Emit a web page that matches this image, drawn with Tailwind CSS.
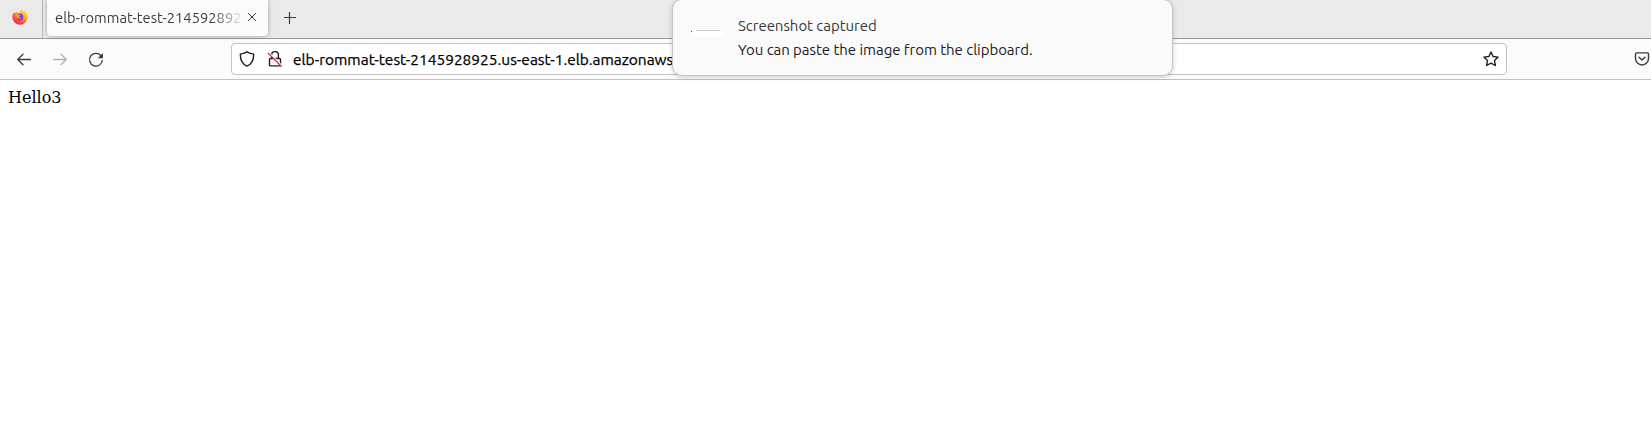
<!DOCTYPE html>
<html lang="en">
<head>
<meta charset="utf-8">
<title>Browser</title>
<script src="https://cdn.jsdelivr.net/npm/@tailwindcss/browser@4"></script>
</head>
<body class="relative h-[448px] w-[1651px] overflow-hidden bg-white font-['Ubuntu','Noto_Sans',sans-serif] text-[#3d3d3d]">
<header>
  <div class="flex h-[39px] items-start border-b border-[#999] bg-[#eaeaea]">
    <div class="flex h-[38px] w-[43px] shrink-0 items-center border-r border-[#b5b5b5] pl-3">
      <svg class="-mt-1 h-4 w-4" viewBox="0 0 16 16">
        <defs>
          <linearGradient id="fire" x1=".85" y1="0" x2=".2" y2="1"><stop offset="0" stop-color="#fff044"/><stop offset=".4" stop-color="#ffb02c"/><stop offset=".7" stop-color="#ff4a48"/><stop offset="1" stop-color="#f01c70"/></linearGradient>
          <linearGradient id="globe" x1=".8" y1="0" x2=".3" y2="1"><stop offset="0" stop-color="#a43be8"/><stop offset="1" stop-color="#5945d8"/></linearGradient>
        </defs>
        <path d="M9.600 0c.6 1.300 1.500 2.100 2.500 3.100.2-.6.1-1 .1-1.500 2.200 1.300 3.500 3.700 3.500 6.500a7.700 7.600 0 0 1-15.400 0c0-2.100.8-3.800 2-5.400l.6 1.300.9.100L4.900 2l.5 1.600 2.600.1C8 2.600 8.400 1.100 9.600 0z" fill="url(#fire)"/>
        <circle cx="8.100" cy="7.900" r="3.300" fill="url(#globe)"/>
        <path d="M3.500 5.600c1.300-.8 2.600-.5 3.400.3l1.600.2c0 .8-1.300.9-1.600 1.500-.2.900.9 1.600 2.700.9-.9 1.800-3.800 1.800-4.800.1z" fill="#ff9b2b"/>
      </svg>
    </div>
    <div class="ml-1 flex h-9 w-[221px] shrink-0 items-center rounded-b bg-[#fbfbfb] pr-2 pl-2 shadow-[0_0_4px_rgba(0,0,0,0.35)]">
      <div class="w-[192px] shrink-0 text-[14.670px] leading-5 tracking-[0.04px] whitespace-nowrap [mask-image:linear-gradient(to_right,black_158px,transparent_190px)]">elb-rommat-test-2145928925</div>
      <svg class="-mt-0.5 h-2.5 w-2.5 shrink-0" viewBox="0 0 10 10" fill="none" stroke="#3d3d3d" stroke-width="1"><path d="M1 1l8 8M9 1l-8 8"/></svg>
    </div>
    <svg class="mt-3 ml-4 h-3 w-3" viewBox="0 0 12 12" fill="none" stroke="#3d3d3d" stroke-width="1.200"><path d="M5.500 0v12M0 5.500h12"/></svg>
  </div>
  <div class="flex h-[41px] items-center border-b border-[#c2c2c2] bg-[#fbfbfb]">
    <svg class="mt-px ml-4 h-4 w-4" viewBox="0 0 16 16" fill="none" stroke="#3d3d3d" stroke-width="1.300" stroke-linecap="round" stroke-linejoin="round"><path d="M14.500 7.500H1.700M7 2.200L1.700 7.500 7 12.800"/></svg>
    <svg class="mt-px ml-5 h-4 w-4" viewBox="0 0 16 16" fill="none" stroke="#b3b3b3" stroke-width="1.300" stroke-linecap="round" stroke-linejoin="round"><path d="M1.500 7.500h12.800M9 2.200L14.300 7.500 9 12.800"/></svg>
    <svg class="mt-px ml-5 h-4 w-4" viewBox="0 0 16 16" fill="none" stroke="#3d3d3d" stroke-width="1.300" stroke-linecap="round"><path d="M12.800 3.500A6.400 6.400 0 1 0 14.300 8.500"/><path d="M15 1v5.200H9.800z" fill="#3d3d3d" stroke="none"/></svg>
    <div class="ml-[127px] flex h-8 w-[1276px] items-center rounded border border-[#c2c2c2] bg-white text-black">
      <svg class="ml-[7px] h-4 w-4" viewBox="0 0 16 16" fill="none" stroke="#202020" stroke-width="1.400" stroke-linejoin="round"><path d="M8 .8C6.400 1.900 3.700 2.600 1.300 3.100c-.1 5.200 1.300 9.900 6.700 12.100 5.400-2.200 6.800-6.900 6.700-12.100C12.300 2.600 9.600 1.900 8 .8z"/></svg>
      <svg class="ml-3 h-4 w-4" viewBox="0 0 16 16" fill="none" stroke="#202020" stroke-width="1.400"><path d="M4.600 7.500V4a3.400 3.400 0 0 1 6.800 0v3.500M3.500 7.500h9q1 0 1 1v5.400q0 1-1 1h-9q-1 0-1-1V8.500q0-1 1-1z"/><path d="M1.500 1.200L15.500 15.200" stroke="#fff" stroke-width="1.500"/><path d="M1 2L14.700 15.700" stroke="#e22850" stroke-width="1.300"/></svg>
      <span class="mt-0.5 ml-2.5 text-[15.470px] leading-5 whitespace-nowrap [-webkit-text-stroke:0.25px_black]">elb-rommat-test-2145928925.us-east-1.elb.amazonaws</span>
      <svg class="mr-[7px] ml-auto h-4 w-4" viewBox="0 0 16 16" fill="none" stroke="#202020" stroke-width="1.400" stroke-linejoin="round"><path d="M8 1l2.100 4.500 5 .6-3.600 3.400.9 5L8 12.100l-4.400 2.400.9-5L.9 6.100l5-.6z"/></svg>
    </div>
    <svg class="ml-[127px] h-4 w-4 shrink-0" viewBox="0 0 16 16" fill="none" stroke="#3d3d3d" stroke-width="1.400" stroke-linecap="round" stroke-linejoin="round"><path d="M2.500 1.900h11q1 0 1 1V7.500a6.500 6.500 0 0 1-13 0V2.900q0-1 1-1zM5 6.200l3 2.900 3-2.900"/></svg>
  </div>
</header>
<main class="px-2 pt-2 font-['DejaVu_Serif',serif] text-base leading-[19px] text-black">Hello3</main>
<aside class="absolute top-[-1px] left-[672px] flex h-[77px] w-[501px] rounded-[10px] border border-[#c4c4c4] bg-[#fafafa] shadow-[0_1px_5px_rgba(0,0,0,0.2)]">
  <div class="mt-[30px] ml-[18px] flex h-[7px] w-8 items-start bg-white"><i class="mt-px h-px w-px bg-[#444]"></i><i class="ml-1 h-px w-6 bg-[#ccc]"></i></div>
  <div class="ml-[15px] pt-3.5 text-[15px] leading-6 whitespace-nowrap">
    <p class="tracking-[-0.04px] text-[#353a3c]">Screenshot captured</p>
    <p class="tracking-[-0.04px] text-[#1c2022]">You can paste the image from the clipboard.</p>
  </div>
</aside>
</body>
</html>
